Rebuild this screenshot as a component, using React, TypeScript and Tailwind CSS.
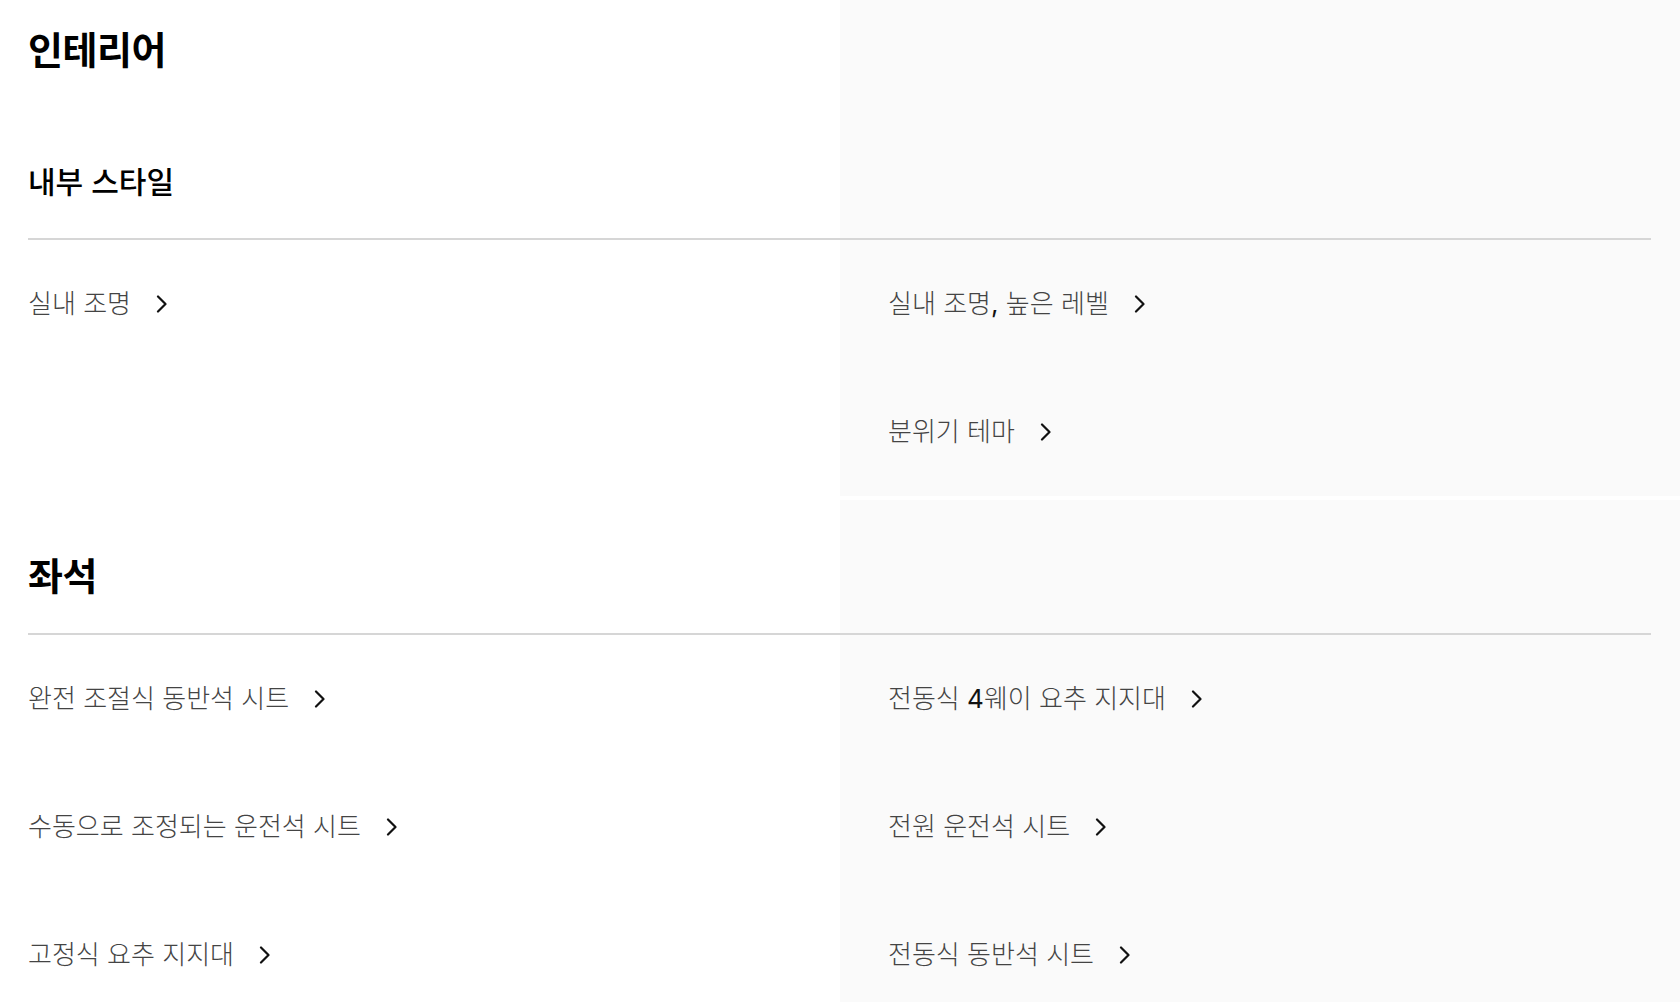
import React from 'react';

interface Section {
  title: string;
  subtitle?: string;
  left: React.ReactNode[];
  right: React.ReactNode[];
}

const sections: Section[] = [
  {
    title: '인테리어',
    subtitle: '내부 스타일',
    left: ['실내 조명'],
    right: [
      <>
        실내 조명<span className="font-normal text-[#111]">,</span> 높은 레벨
      </>,
      '분위기 테마',
    ],
  },
  {
    title: '좌석',
    left: ['완전 조절식 동반석 시트', '수동으로 조정되는 운전석 시트', '고정식 요추 지지대'],
    right: [
      <>
        전동식 <span className="font-normal text-[#111]">4</span>웨이 요추 지지대
      </>,
      '전원 운전석 시트',
      '전동식 동반석 시트',
    ],
  },
];

function Chevron() {
  return (
    <svg width="12" height="18" viewBox="0 0 12 18" fill="none" className="ml-[25px] shrink-0">
      <path d="M2 1.5l7.5 7.5L2 16.5" stroke="#111" strokeWidth="2.2" strokeLinecap="round" strokeLinejoin="round" />
    </svg>
  );
}

function Item({ label }: { label: React.ReactNode }) {
  return (
    <a href="#" className="flex h-[128px] items-center">
      <span className="text-[26px] font-light leading-none text-[#444]">{label}</span>
      <Chevron />
    </a>
  );
}

export default function App() {
  return (
    <div className="min-h-screen bg-white font-['Inter','Noto_Sans_CJK_KR',sans-serif] text-black">
      {sections.map((section, i) => (
        <section
          key={section.title}
          className={`bg-[linear-gradient(to_right,#ffffff_840px,#fafafa_840px)] ${i > 0 ? 'mt-1' : ''}`}
        >
          <div className="ml-7 mr-[29px]">
            {section.subtitle ? (
              <div className="border-b-2 border-[#d6d6d6] pt-[26px] pb-[36px]">
                <h2 className="text-[38px] font-bold leading-[48px] tracking-[-0.5px]">{section.title}</h2>
                <h3 className="mt-[88px] text-[30px] font-medium leading-[40px]">{section.subtitle}</h3>
              </div>
            ) : (
              <div className="border-b-2 border-[#d6d6d6] pt-[54px] pb-[35px]">
                <h2 className="text-[38px] font-bold leading-[44px] tracking-[-0.5px]">{section.title}</h2>
              </div>
            )}
            <div className="grid grid-cols-[812px_1fr]">
              <div>
                {section.left.map((label, j) => (
                  <Item key={j} label={label} />
                ))}
              </div>
              <div className="pl-12">
                {section.right.map((label, j) => (
                  <Item key={j} label={label} />
                ))}
              </div>
            </div>
          </div>
        </section>
      ))}
    </div>
  );
}
